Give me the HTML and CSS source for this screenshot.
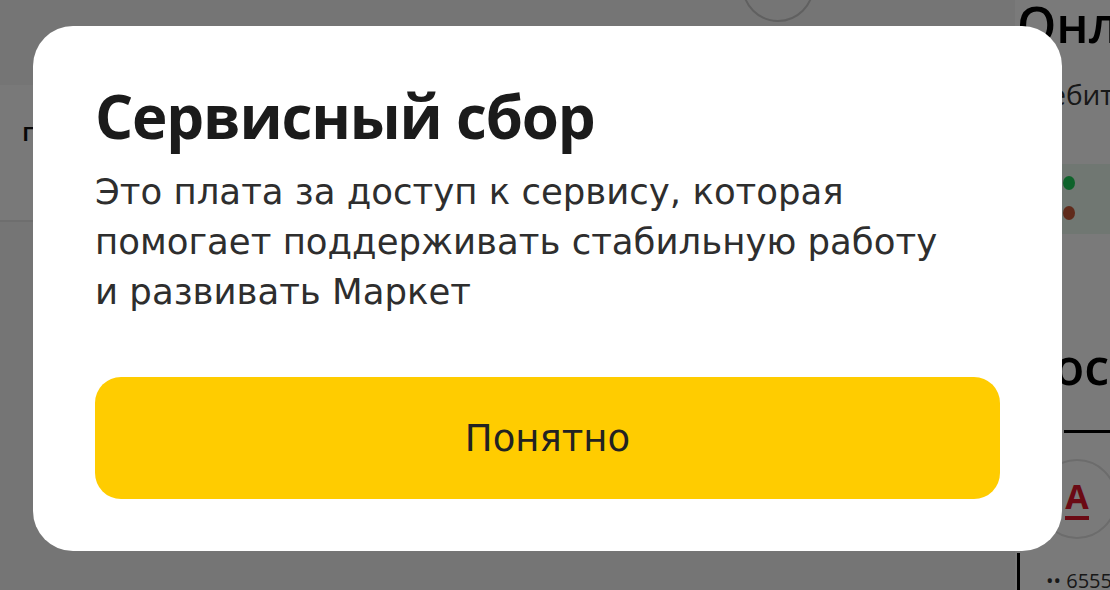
FILE: index.html
```html
<!DOCTYPE html>
<html lang="ru">
<head>
  <meta charset="utf-8">
  <title>Сервисный сбор</title>
  <link rel="stylesheet" href="styles.css">
</head>
<body>
  <div class="page">
    <main class="content">
      <header class="topbar">
        <span class="avatar"></span>
      </header>
      <div class="band">
        <span class="band-text">город</span>
      </div>
    </main>
    <aside class="side">
      <h2 class="side-title">Онлайн</h2>
      <p class="side-sub">Дебит</p>
      <div class="pay-row">
        <span class="dot green"></span>
        <span class="dot brown"></span>
      </div>
      <h2 class="side-title second">Постоплата</h2>
      <div class="rule"></div>
      <div class="bank">
        <span class="bank-logo">А</span>
      </div>
      <div class="card-row">
        <span class="card-num">•• 6555</span>
      </div>
    </aside>
  </div>

  <div class="overlay">
    <div class="modal">
      <h1 class="modal-title">Сервисный сбор</h1>
      <p class="modal-text">Это плата за доступ к сервису, которая<br>помогает поддерживать стабильную работу<br>и развивать Маркет</p>
      <button class="modal-btn">Понятно</button>
    </div>
  </div>
</body>
</html>
```

FILE: styles.css
```css
html, body {
  margin: 0;
  padding: 0;
}
body {
  width: 1110px;
  height: 590px;
  overflow: hidden;
  font-family: "Open Sans", "Noto Sans", sans-serif;
  background: #fff;
}

/* page behind the dim layer */
.page {
  display: grid;
  grid-template-columns: 1015px 95px;
  height: 590px;
}
.content {
  background: #f4f4f4;
}
.topbar {
  height: 85px;
  overflow: hidden;
}
.avatar {
  display: block;
  width: 68px;
  height: 68px;
  margin: -50px 0 0 742px;
  border: 2px solid #c8c8c8;
  border-radius: 50%;
}
.band {
  height: 137px;
  background: #fcfcfc;
  border-bottom: 2px solid #e6e6e6;
  padding: 28px 0 0 22px;
  box-sizing: border-box;
}
.band-text {
  font-size: 26px;
  color: #111;
  font-weight: 600;
}

.side {
  background: #fff;
  padding-left: 2px;
  overflow: hidden;
}
.side-title {
  margin: -6px 0 0;
  font-size: 50px;
  font-weight: 600;
  line-height: 60px;
  color: #000;
  white-space: nowrap;
}
.side-title.second {
  margin-top: 102px;
}
.side-sub {
  margin: 22px 0 0 14px;
  font-size: 28px;
  line-height: 36px;
  color: #333;
  white-space: nowrap;
}
.pay-row {
  margin-top: 52px;
  height: 70px;
  background: #eaf8ee;
  display: flex;
  flex-direction: column;
  gap: 16px;
  padding: 12px 0 0 46px;
  box-sizing: border-box;
}
.dot {
  display: block;
  width: 12px;
  height: 14px;
  border-radius: 50%;
}
.dot.green { background: #1fd05a; }
.dot.brown { background: #c85a3a; }
.rule {
  margin: 34px 0 0 47px;
  height: 3px;
  background: #000;
}
.bank {
  margin: 26px 0 0 20px;
  width: 76px;
  height: 76px;
  border: 2px solid #e2e2e2;
  border-radius: 50%;
  display: flex;
  align-items: center;
  justify-content: center;
}
.bank-logo {
  font-size: 34px;
  font-weight: 700;
  color: #e0162b;
  line-height: 1;
  border-bottom: 4px solid #e0162b;
  padding-bottom: 3px;
}
.card-row {
  margin-top: 14px;
  border-left: 3px solid #000;
  height: 60px;
  padding: 14px 0 0 26px;
  box-sizing: border-box;
}
.card-num {
  font-size: 20px;
  color: #333;
  white-space: nowrap;
}

/* dim layer with the dialog */
.overlay {
  position: fixed;
  inset: 0;
  background: rgba(0, 0, 0, 0.52);
}
.modal {
  margin: 26px 0 0 33px;
  width: 1029px;
  height: 525px;
  box-sizing: border-box;
  padding: 57px 62px 52px;
  background: #fff;
  border-radius: 40px;
  display: flex;
  flex-direction: column;
}
.modal-title {
  margin: 0;
  font-size: 60px;
  line-height: 67px;
  font-weight: 700;
  letter-spacing: -1.2px;
  color: #1b1b1b;
}
.modal-text {
  margin: 17px 0 0;
  font-family: "DejaVu Sans", sans-serif;
  font-size: 35.5px;
  line-height: 50px;
  color: #2e2e2e;
}
.modal-btn {
  margin-top: auto;
  height: 122px;
  border: 0;
  border-radius: 26px;
  background: #ffcc00;
  font-family: "DejaVu Sans", sans-serif;
  font-size: 37px;
  color: #222;
}
```
